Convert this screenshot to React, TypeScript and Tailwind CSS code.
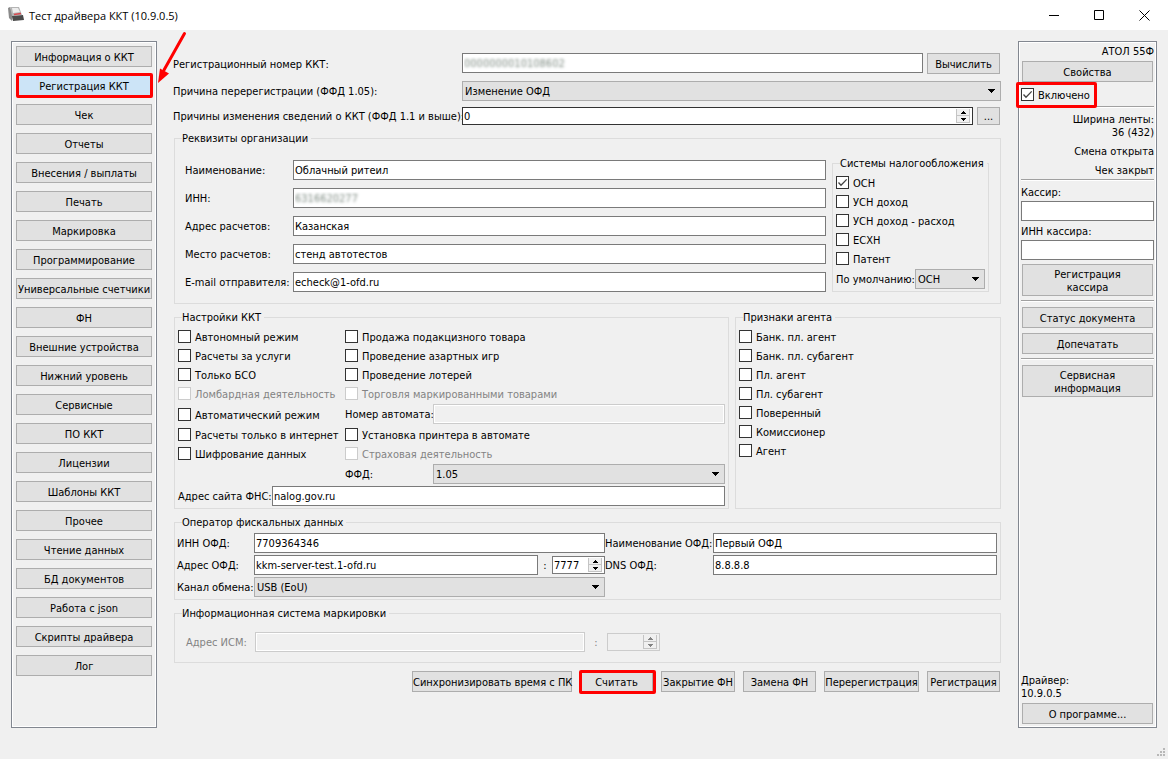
import React, { useState } from 'react';

const NAV_ITEMS = [
  'Информация о ККТ',
  'Регистрация ККТ',
  'Чек',
  'Отчеты',
  'Внесения / выплаты',
  'Печать',
  'Маркировка',
  'Программирование',
  'Универсальные счетчики',
  'ФН',
  'Внешние устройства',
  'Нижний уровень',
  'Сервисные',
  'ПО ККТ',
  'Лицензии',
  'Шаблоны ККТ',
  'Прочее',
  'Чтение данных',
  'БД документов',
  'Работа с json',
  'Скрипты драйвера',
  'Лог',
];

const AGENT_FLAGS = [
  'Банк. пл. агент',
  'Банк. пл. субагент',
  'Пл. агент',
  'Пл. субагент',
  'Поверенный',
  'Комиссионер',
  'Агент',
];

const TAX_SYSTEMS = ['ОСН', 'УСН доход', 'УСН доход - расход', 'ЕСХН', 'Патент'];

interface ButtonProps {
  children: React.ReactNode;
  className?: string;
  active?: boolean;
  marker?: string;
  onClick?: () => void;
}

const Button: React.FC<ButtonProps> = ({ children, className = 'h-[21px]', active, marker, onClick }) => (
  <button
    type="button"
    onClick={onClick}
    className={`relative pt-px border border-[#adadad] whitespace-nowrap ${active ? 'bg-[#cce4f7]' : 'bg-[#e1e1e1]'} ${className}`}
  >
    {children}
    {marker && <Marker className={marker} />}
  </button>
);

// red frame drawn over a control
const Marker: React.FC<{ className: string }> = ({ className }) => (
  <span className={`absolute border-3 border-[#ff0000] rounded-[2px] pointer-events-none ${className}`} />
);

interface FieldLabelProps {
  htmlFor: string;
  children: React.ReactNode;
  className?: string;
}

const FieldLabel: React.FC<FieldLabelProps> = ({ htmlFor, children, className = '' }) => (
  <label htmlFor={htmlFor} className={`pt-px whitespace-nowrap ${className}`}>
    {children}
  </label>
);

interface TextInputProps {
  id: string;
  value?: string;
  className?: string;
  disabled?: boolean;
  hiddenValue?: boolean;
}

const TextInput: React.FC<TextInputProps> = ({ id, value = '', className = '', disabled, hiddenValue }) => (
  <input
    id={id}
    type="text"
    defaultValue={value}
    disabled={disabled}
    className={`h-5 min-w-0 border pl-px pt-px bg-white border-[#7a7a7a] disabled:bg-[#f0f0f0] disabled:border-[#cccccc] disabled:shadow-[inset_0_0_0_1px_#ffffff] ${
      hiddenValue ? 'text-transparent [text-shadow:0_0_3px_#7d8a80]' : ''
    } ${className}`}
  />
);

interface CheckProps {
  label: string;
  checked?: boolean;
  disabled?: boolean;
  className?: string;
}

const Check: React.FC<CheckProps> = ({ label, checked = false, disabled, className = 'h-[19px]' }) => {
  const [on, setOn] = useState(checked);
  return (
    <label className={`flex items-center gap-1 whitespace-nowrap ${disabled ? 'text-[#838383]' : ''} ${className}`}>
      <span className="grid shrink-0">
        <input
          type="checkbox"
          checked={on}
          disabled={disabled}
          onChange={() => setOn(!on)}
          className="col-start-1 row-start-1 appearance-none size-[13px] bg-white border border-[#333333] disabled:border-[#cccccc]"
        />
        {on && (
          <svg className="col-start-1 row-start-1 size-[13px] pointer-events-none" viewBox="0 0 13 13" fill="none">
            <path d="M2.5 6.5 L5 9.2 L10.7 3.4" stroke="#444444" strokeWidth="1.3" />
          </svg>
        )}
      </span>
      <span className="pt-[2px]">{label}</span>
    </label>
  );
};

interface SelectProps {
  id: string;
  options: string[];
  className?: string;
}

const Select: React.FC<SelectProps> = ({ id, options, className = '' }) => (
  <div className={`grid h-5 items-center ${className}`}>
    <select
      id={id}
      className="col-start-1 row-start-1 w-full h-5 appearance-none border border-[#adadad] bg-[#e1e1e1] pl-[2px] pt-px"
    >
      {options.map((o) => (
        <option key={o}>{o}</option>
      ))}
    </select>
    <svg className="col-start-1 row-start-1 justify-self-end mr-[6px] w-[7px] h-1 pointer-events-none" viewBox="0 0 7 4">
      <path d="M0 0h7v1h-1v1h-1v1h-1v1h-1v-1h-1v-1h-1v-1h-1z" fill="#000" />
    </svg>
  </div>
);

interface SpinProps {
  id: string;
  value?: string;
  className?: string;
  disabled?: boolean;
}

const Spin: React.FC<SpinProps> = ({ id, value = '', className = '', disabled }) => (
  <div
    className={`flex h-[18px] border p-px ${
      disabled ? 'bg-[#f0f0f0] border-[#cccccc] text-[#838383]' : 'bg-white'
    } ${className}`}
  >
    <input id={id} type="text" defaultValue={value} disabled={disabled} className="flex-1 min-w-0 pt-px bg-transparent" />
    <div className="flex flex-col w-[14px] mr-px border border-t-0 border-[#c4c4c4] bg-[#f0f0f0]">
      <button type="button" disabled={disabled} aria-label="Больше" className="flex flex-1 items-center justify-center border-b border-[#c4c4c4]">
        <svg className="w-[5px] h-[3px]" viewBox="0 0 5 3" fill="currentColor">
          <path d="M2 0h1v1h1v1h1v1h-5v-1h1v-1h1z" />
        </svg>
      </button>
      <button type="button" disabled={disabled} aria-label="Меньше" className="flex flex-1 items-center justify-center">
        <svg className="w-[5px] h-[3px]" viewBox="0 0 5 3" fill="currentColor">
          <path d="M0 0h5v1h-1v1h-1v1h-1v-1h-1v-1h-1z" />
        </svg>
      </button>
    </div>
  </div>
);

interface GroupProps {
  title: string;
  children: React.ReactNode;
  className?: string;
}

const Group: React.FC<GroupProps> = ({ title, children, className = '' }) => (
  <fieldset className={`min-w-0 border border-[#dcdcdc] ${className}`}>
    <legend className="ml-[7px] pr-[3px] whitespace-nowrap">{title}</legend>
    {children}
  </fieldset>
);

const Separator = () => <div className="h-[2px] shrink-0 bg-white border-t border-[#a0a0a0]" />;

const TitleBar = () => (
  <header className="flex h-[30px] shrink-0 items-center bg-white text-black">
    <svg className="ml-2 size-4" viewBox="0 0 16 16">
      <path d="M0 1 L2 0 L5 8 L4 14 L1 11 Z" fill="#8a8a8a" />
      <path d="M2 0 H11 L14 8 L4 9 Z" fill="#b4b4b4" />
      <path d="M4 1 H10 L12 5 L5 6 Z" fill="#ececec" />
      <path d="M4 9 L15 8 L16 13 L5 14 Z" fill="#4a4a4a" />
      <path d="M6 7.5 L13 6.5" stroke="#d8484e" strokeWidth="1.5" />
    </svg>
    <h1 className="ml-[5px] text-[11px] [font-family:'Open_Sans',sans-serif]">Тест драйвера ККТ (10.9.0.5)</h1>
    <div className="ml-auto flex h-full">
      <button type="button" aria-label="Свернуть" className="w-[45px] grid place-items-center">
        <svg className="size-[11px]" viewBox="0 0 11 11" stroke="#000" fill="none">
          <path d="M0 5.5h10" />
        </svg>
      </button>
      <button type="button" aria-label="Развернуть" className="w-[45px] grid place-items-center">
        <svg className="size-[11px]" viewBox="0 0 11 11" stroke="#000" fill="none">
          <path d="M0.5 0.5h9v9h-9z" />
        </svg>
      </button>
      <button type="button" aria-label="Закрыть" className="w-[46px] pr-px grid place-items-center">
        <svg className="size-[11px]" viewBox="0 0 11 11" stroke="#000" fill="none">
          <path d="M0.5 0.5l10 10M10.5 0.5l-10 10" />
        </svg>
      </button>
    </div>
  </header>
);

const Sidebar = () => {
  const [current, setCurrent] = useState('Регистрация ККТ');
  return (
    <nav className="relative flex flex-col gap-2 w-[146px] shrink-0 border border-[#828790] shadow-[inset_0_0_0_1px_#ffffff] p-1">
      {NAV_ITEMS.map((item) => (
        <Button
          key={item}
          active={item === current}
          marker={item === 'Регистрация ККТ' ? '-inset-y-[3px] -left-px -right-[2px]' : undefined}
          onClick={() => setCurrent(item)}
        >
          {item}
        </Button>
      ))}
      {/* pointer to the registration page */}
      <svg className="absolute left-[143px] -top-[11px] w-[32px] h-[54px] pointer-events-none" viewBox="0 0 32 54">
        <path d="M29.5 2.5 L9 39" stroke="#ff0000" strokeWidth="3" strokeLinecap="round" />
        <path d="M3 52 L5 37.5 L14 42.5 Z" fill="#ff0000" />
      </svg>
    </nav>
  );
};

const Organization = () => (
  <Group title="Реквизиты организации">
    <div className="flex gap-[6px] pt-[15px] pl-[10px] pr-[11px] pb-[11px]">
      <div className="grid flex-1 grid-cols-[108px_1fr] gap-y-2 items-center">
        <FieldLabel htmlFor="org-name">Наименование:</FieldLabel>
        <TextInput id="org-name" value="Облачный ритеил" />
        <FieldLabel htmlFor="org-inn">ИНН:</FieldLabel>
        <TextInput id="org-inn" value="6316620277" hiddenValue />
        <FieldLabel htmlFor="org-address">Адрес расчетов:</FieldLabel>
        <TextInput id="org-address" value="Казанская" />
        <FieldLabel htmlFor="org-place">Место расчетов:</FieldLabel>
        <TextInput id="org-place" value="стенд автотестов" />
        <FieldLabel htmlFor="org-email">E-mail отправителя:</FieldLabel>
        <TextInput id="org-email" value="echeck@1-ofd.ru" />
      </div>
      <Group title="Системы налогообложения" className="w-[157px] -mt-[3px] self-start">
        <div className="pt-[3px] px-[3px] pb-[2px]">
          {TAX_SYSTEMS.map((t) => (
            <Check key={t} label={t} checked={t === 'ОСН'} />
          ))}
          <div className="flex items-center justify-between mt-px">
            <FieldLabel htmlFor="tax-default">По умолчанию:</FieldLabel>
            <Select id="tax-default" options={TAX_SYSTEMS} className="w-[70px]" />
          </div>
        </div>
      </Group>
    </div>
  </Group>
);

const Settings = () => (
  <Group title="Настройки ККТ" className="flex-1">
    <div className="pt-[3px] px-[3px] pb-px">
      <div className="grid grid-cols-[167px_1fr]">
        <Check label="Автономный режим" />
        <Check label="Продажа подакцизного товара" />
        <Check label="Расчеты за услуги" />
        <Check label="Проведение азартных игр" />
        <Check label="Только БСО" />
        <Check label="Проведение лотерей" />
        <Check label="Ломбардная деятельность" disabled />
        <Check label="Торговля маркированными товарами" disabled />
        <Check label="Автоматический режим" className="h-[22px]" />
        <div className="flex items-center">
          <FieldLabel htmlFor="machine" className="w-[88px]">Номер автомата:</FieldLabel>
          <TextInput id="machine" disabled className="flex-1" />
        </div>
        <Check label="Расчеты только в интернет" />
        <Check label="Установка принтера в автомате" />
        <Check label="Шифрование данных" />
        <Check label="Страховая деятельность" disabled />
        <div className="col-start-2 flex items-center h-[22px]">
          <FieldLabel htmlFor="ffd" className="w-[88px]">ФФД:</FieldLabel>
          <Select id="ffd" options={['1.05', '1.1', '1.2']} className="flex-1" />
        </div>
      </div>
      <div className="flex items-center h-[22px]">
        <FieldLabel htmlFor="fns" className="w-[94px]">Адрес сайта ФНС:</FieldLabel>
        <TextInput id="fns" value="nalog.gov.ru" className="flex-1" />
      </div>
    </div>
  </Group>
);

const Operator = () => (
  <Group title="Оператор фискальных данных">
    <div className="grid grid-cols-[77px_351px_108px_1fr] gap-y-[2px] items-center pt-1 pl-[2px] pr-[3px] pb-[2px]">
      <FieldLabel htmlFor="ofd-inn">ИНН ОФД:</FieldLabel>
      <TextInput id="ofd-inn" value="7709364346" />
      <FieldLabel htmlFor="ofd-name">Наименование ОФД:</FieldLabel>
      <TextInput id="ofd-name" value="Первый ОФД" />
      <FieldLabel htmlFor="ofd-host">Адрес ОФД:</FieldLabel>
      <div className="flex items-center">
        <TextInput id="ofd-host" value="kkm-server-test.1-ofd.ru" className="flex-1" />
        <FieldLabel htmlFor="ofd-port" className="w-[14px] text-center">:</FieldLabel>
        <Spin id="ofd-port" value="7777" className="w-[53px] border-[#7a7a7a]" />
      </div>
      <FieldLabel htmlFor="ofd-dns">DNS ОФД:</FieldLabel>
      <TextInput id="ofd-dns" value="8.8.8.8" />
      <FieldLabel htmlFor="ofd-channel">Канал обмена:</FieldLabel>
      <Select id="ofd-channel" options={['USB (EoU)', 'Ethernet', 'Wi-Fi', 'GSM']} />
    </div>
  </Group>
);

const StatusPanel = () => (
  <aside className="flex flex-col w-[139px] shrink-0 border border-[#828790] shadow-[inset_0_0_0_1px_#ffffff] p-[2px] pb-[3px]">
    <p className="text-right mt-px">АТОЛ 55Ф</p>
    <Button className="h-[21px] mx-px mt-[3px]">Свойства</Button>
    <div className="relative mt-[3px] mb-[2px]">
      <Check label="Включено" checked />
      <Marker className="-left-[5px] -top-[3px] w-[81px] h-[26px]" />
    </div>
    <Separator />
    <p className="text-right mt-[5px]">
      Ширина ленты:
      <br />
      36 (432)
    </p>
    <p className="text-right mt-[6px]">Смена открыта</p>
    <p className="text-right mt-[6px] mb-[2px]">Чек закрыт</p>
    <Separator />
    <label htmlFor="cashier" className="mt-[5px] mb-[2px]">Кассир:</label>
    <TextInput id="cashier" />
    <label htmlFor="cashier-inn" className="mt-1 mb-[2px]">ИНН кассира:</label>
    <TextInput id="cashier-inn" />
    <Button className="h-8 mx-px my-1">
      Регистрация
      <br />
      кассира
    </Button>
    <Separator />
    <Button className="h-[21px] mx-px mt-[5px]">Статус документа</Button>
    <Button className="h-[21px] mx-px mt-[5px] mb-1">Допечатать</Button>
    <Separator />
    <Button className="h-8 mx-px mt-[5px]">
      Сервисная
      <br />
      информация
    </Button>
    <p className="mt-auto">
      Драйвер:
      <br />
      10.9.0.5
    </p>
    <Button className="h-[21px] mx-px mt-[3px]">О программе...</Button>
  </aside>
);

const App: React.FC = () => {
  return (
    <div className="flex flex-col min-h-screen bg-[#f0f0f0] text-black text-[11px] leading-[13px] [font-family:'DejaVu_Sans_Condensed','Noto_Sans',sans-serif]">
      <TitleBar />

      <div className="flex flex-1 gap-[17px] px-[11px] pt-[11px]">
        <Sidebar />

        <main className="flex flex-1 min-w-0 flex-col gap-[7px] pt-3">
          <div className="grid grid-cols-[289px_1fr] gap-y-[6px] -ml-px items-center">
            <FieldLabel htmlFor="reg-number">Регистрационный номер ККТ:</FieldLabel>
            <div className="flex items-start gap-1 h-[22px] pr-px">
              <TextInput id="reg-number" value="0000000010108602" hiddenValue className="flex-1" />
              <Button className="h-[21px] w-[73px]">Вычислить</Button>
            </div>
            <FieldLabel htmlFor="reason">Причина перерегистрации (ФФД 1.05):</FieldLabel>
            <Select id="reason" options={['Изменение ОФД', 'Замена ФН', 'Изменение реквизитов']} />
            <FieldLabel htmlFor="reasons">Причины изменения сведений о ККТ (ФФД 1.1 и выше):</FieldLabel>
            <div className="flex gap-1 pr-px">
              <Spin id="reasons" value="0" className="flex-1 border-[#333333]" />
              <Button className="h-[18px] w-[23px]">...</Button>
            </div>
          </div>

          <Organization />

          <div className="flex gap-[6px]">
            <Settings />
            <Group title="Признаки агента" className="w-[266px]">
              <div className="pt-[3px] px-[3px]">
                {AGENT_FLAGS.map((flag) => (
                  <Check key={flag} label={flag} />
                ))}
              </div>
            </Group>
          </div>

          <Operator />

          <Group title="Информационная система маркировки">
            <div className="flex items-center pt-3 pb-[10px] px-[11px] text-[#838383]">
              <FieldLabel htmlFor="ism-host" className="w-[69px]">Адрес ИСМ:</FieldLabel>
              <TextInput id="ism-host" disabled className="w-[330px]" />
              <FieldLabel htmlFor="ism-port" className="w-[22px] text-center">:</FieldLabel>
              <Spin id="ism-port" disabled className="w-[53px]" />
            </div>
          </Group>

          <div className="flex justify-end gap-2 mt-px pr-px">
            <Button className="h-[21px] w-[160px]">Синхронизировать время с ПК</Button>
            <Button className="h-[21px] w-[73px]" marker="-top-[2px] -bottom-[3px] -left-[2px] -right-1">Считать</Button>
            <Button className="h-[21px] w-[74px]">Закрытие ФН</Button>
            <Button className="h-[21px] w-[73px]">Замена ФН</Button>
            <Button className="h-[21px] w-[95px]">Перерегистрация</Button>
            <Button className="h-[21px] w-[73px]">Регистрация</Button>
          </div>
        </main>

        <StatusPanel />
      </div>

      {/* size grip */}
      <footer className="flex h-[31px] items-end justify-end pr-[2px] pb-[2px]">
        <svg className="size-[9px]" viewBox="0 0 9 9" fill="#b8b8b8">
          <path d="M6 0h2v2h-2zM6 3h2v2h-2zM3 3h2v2h-2zM6 6h2v2h-2zM3 6h2v2h-2zM0 6h2v2h-2z" />
        </svg>
      </footer>
    </div>
  );
};

export default App;
